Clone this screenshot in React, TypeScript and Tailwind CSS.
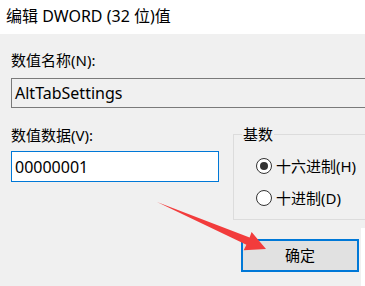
import React from "react";

function Radio({ checked, label }: { checked?: boolean; label: string }) {
  return (
    <div className="flex items-center h-[20px]">
      <span className="w-[16px] h-[16px] rounded-full border-[1.5px] border-[#333] bg-white flex items-center justify-center">
        {checked && <span className="w-[8px] h-[8px] rounded-full bg-[#333]" />}
      </span>
      <span className="ml-[4px] leading-[20px]">{label}</span>
    </div>
  );
}

export default function App() {
  return (
    <div className="relative w-[365px] h-[286px] overflow-hidden flex flex-col text-[15px] text-black font-['Noto_Sans','Noto_Sans_CJK_SC',sans-serif]">
      <div className="h-[34px] bg-white flex items-center pl-[6px] pb-[3px] text-[16px]">
        编辑 DWORD (32 位)值
      </div>
      <div className="flex-1 bg-[#f0f0f0] flex flex-col">
        <div className="mt-[16px] pl-[11px] leading-[20px]">数值名称(N):</div>
        <div className="mt-[8px] ml-[11px] mr-[-20px] h-[30px] border border-[#7a7a7a] bg-[#f0f0f0] flex items-center pl-[3px] text-[16px]">
          AltTabSettings
        </div>
        <div className="flex">
          <div className="ml-[11px] w-[208px] flex flex-col">
            <div className="mt-[17px] leading-[20px]">数值数据(V):</div>
            <div className="mt-[6px] h-[31px] border border-[#0078d7] bg-white flex items-center pl-[3px] text-[16px]">
              00000001
            </div>
          </div>
          <fieldset className="mt-[16px] ml-[14px] mr-[-20px] flex-1 border border-[#dcdcdc] pl-[22px] pt-[12px] pb-[11px] flex flex-col gap-[12px]">
            <legend className="ml-[-14px] px-[1px] leading-[20px]">基数</legend>
            <Radio checked label="十六进制(H)" />
            <Radio label="十进制(D)" />
          </fieldset>
        </div>
        <div className="mt-[8px] flex-1 flex justify-end gap-[2px]">
          <button className="mt-[11px] w-[118px] h-[33px] border-2 border-[#0078d7] bg-[#e1e1e1] flex items-center justify-center">
            确定
          </button>
          <div className="w-[4px] bg-white" />
        </div>
      </div>
      <svg className="absolute left-0 top-0 pointer-events-none" width="365" height="286" viewBox="0 0 365 286">
        <polygon
          points="157,202 249.6,237.4 251.6,231.9 266,249 243.7,250.3 246.4,244.8"
          fill="#f23c3c"
        />
      </svg>
    </div>
  );
}
